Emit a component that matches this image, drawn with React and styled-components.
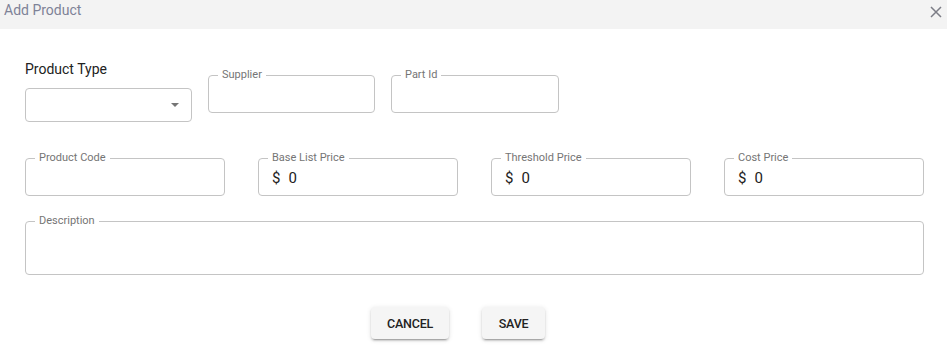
import styled, { createGlobalStyle } from 'styled-components';

const GlobalStyle = createGlobalStyle`
	body{
		margin: 0;
		background: #fff;
		font-family: Roboto, "Liberation Sans", sans-serif;
	}
`

const App = () => {
	return(
		<Dialog>
			<GlobalStyle />
			<Header>
				<Title>Add Product</Title>
				<CloseButton aria-label="close">
					<svg width="12" height="12" viewBox="0 0 12 12">
						<path d="M1 1L11 11M11 1L1 11" stroke="#7c7d86" strokeWidth="1.5" fill="none" />
					</svg>
				</CloseButton>
			</Header>
			<Body>
				<TopRow>
					<SelectGroup>
						<PlainLabel>Product Type</PlainLabel>
						<SelectBox>
							<svg width="8" height="4" viewBox="0 0 8 4">
								<polygon points="0,0 8,0 4,4" fill="#757575" />
							</svg>
						</SelectBox>
					</SelectGroup>
					<Field label="Supplier" offset={10} />
					<Field label="Part Id" offset={10} />
				</TopRow>
				<PriceRow>
					<Field label="Product Code" />
					<Field label="Base List Price" value="0" money />
					<Field label="Threshold Price" value="0" money />
					<Field label="Cost Price" value="0" money />
				</PriceRow>
				<Field label="Description" tall margin={19} />
				<Actions>
					<Button>Cancel</Button>
					<Button>Save</Button>
				</Actions>
			</Body>
		</Dialog>
	)
}

const Field = ({ label, value, money, tall, offset = 0, margin = 0 }) => (
	<Outline $tall={tall} $offset={offset} $margin={margin}>
		<Legend>{label}</Legend>
		<InputLine $tall={tall}>
			{money && <Adornment>$</Adornment>}
			{value}
		</InputLine>
	</Outline>
)

const Dialog = styled.div`
	width: 947px;
	height: 347px;
	background: #fff;
	overflow: hidden;
`

const Header = styled.div`
	height: 29px;
	background: #f3f3f3;
	display: flex;
	justify-content: space-between;
	align-items: flex-start;
	padding: 0 5px 0 4px;
	box-sizing: border-box;
`

const Title = styled.div`
	font-size: 14px;
	line-height: 20px;
	color: #7e8297;
`

const CloseButton = styled.div`
	display: flex;
	padding-top: 6px;
`

const Body = styled.div`
	padding: 30px 23px 0 25px;
`

const TopRow = styled.div`
	display: grid;
	grid-template-columns: 167px 167px 168px;
	column-gap: 16px;
	align-items: start;
`

const SelectGroup = styled.div`
	display: flex;
	flex-direction: column;
`

const PlainLabel = styled.div`
	font-size: 14px;
	line-height: 20px;
	color: #222;
	margin-bottom: 9px;
`

const SelectBox = styled.div`
	height: 34px;
	box-sizing: border-box;
	border: 1px solid #c4c4c4;
	border-radius: 4px;
	display: flex;
	align-items: center;
	justify-content: flex-end;
	padding-right: 12px;
`

const PriceRow = styled.div`
	display: grid;
	grid-template-columns: repeat(4, 1fr);
	column-gap: 33px;
	margin-top: 30px;
`

const Outline = styled.fieldset`
	margin: ${p => p.$offset || p.$margin}px 0 0;
	padding: 0 10px 4px;
	border: 1px solid #c4c4c4;
	border-radius: 4px;
	min-width: 0;
`

const Legend = styled.legend`
	font-size: 11px;
	line-height: 12px;
	color: #757575;
	padding: 0 4px;
	margin-left: -1px;
`

const InputLine = styled.div`
	height: ${p => p.$tall ? 43 : 27}px;
	display: flex;
	align-items: center;
	padding-left: 3px;
	font-size: 15px;
	color: #222;
`

const Adornment = styled.span`
	margin-right: 8px;
`

const Actions = styled.div`
	display: flex;
	justify-content: center;
	gap: 33px;
	margin-top: 32px;
	padding-right: 33px;
`

const Button = styled.button`
	height: 32px;
	min-width: 63px;
	padding: 0 16px;
	border: none;
	border-radius: 4px;
	background: #f5f5f5;
	font-family: Roboto, "Liberation Sans", sans-serif;
	font-size: 12.5px;
	font-weight: 500;
	letter-spacing: -0.2px;
	text-transform: uppercase;
	color: #222;
	box-shadow: 0 3px 1px -2px rgba(0,0,0,.2), 0 2px 2px 0 rgba(0,0,0,.14), 0 1px 5px 0 rgba(0,0,0,.12);
`

export default App;
